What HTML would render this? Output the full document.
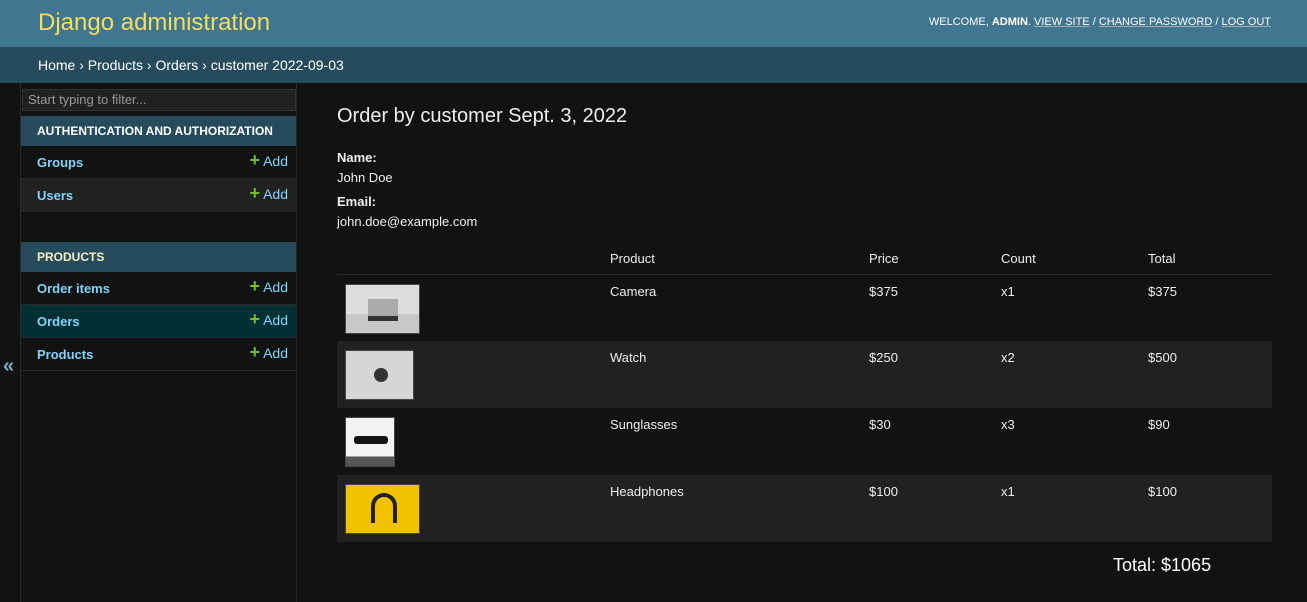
<!DOCTYPE html>
<html><head><meta charset="utf-8"><style>
*{box-sizing:border-box;margin:0;padding:0}
body{width:1307px;height:602px;overflow:hidden;background:#121212;font-family:"Liberation Sans",sans-serif;color:#eee;position:relative}
#hdr{position:absolute;left:0;top:0;width:1307px;height:47px;background:#417690;}
#hdr .brand{position:absolute;left:38px;top:9px;font-size:24px;color:#f5dd5d;}
#hdr .tools{position:absolute;right:36px;top:16px;font-size:11px;letter-spacing:0;color:#fff;white-space:nowrap}
#hdr .tools u{text-decoration:underline;text-decoration-color:#aaa}
#bc{position:absolute;left:0;top:47px;width:1307px;height:36px;background:#264b5d;padding:10px 38px;font-size:14px;color:#fff}
#strip{position:absolute;left:0;top:83px;width:21px;height:519px;border-right:1px solid #2a2a2a}
#strip span{position:absolute;left:3px;top:272px;color:#79aec8;font-size:20px;font-weight:bold}
#side{position:absolute;left:21px;top:83px;width:276px;height:519px;border-right:1px solid #2a2a2a}
.filter{position:absolute;left:1px;top:6px;width:274px;height:22px;border:1px solid #333;background:#212121;color:#999;font-size:13px;padding:2px 5px}
.cap{position:absolute;left:0;width:275px;height:30px;background:#264b5d;font-size:12px;font-weight:bold;letter-spacing:0;padding:8px 16px;color:#fff;white-space:nowrap}
.row{position:absolute;left:0;width:275px;height:33px;border-bottom:1px solid #282828;padding:9px 16px 0;font-size:13px;font-weight:bold;color:#81d4fa}
.row .add{position:absolute;right:8px;top:7px;font-weight:normal;color:#81d4fa;font-size:14px}
.row .add b{color:#70bf2b;font-size:18px;line-height:13px}
h1{position:absolute;left:337px;top:105px;font-size:20px;font-weight:normal;color:#eee;white-space:nowrap}
.lbl{position:absolute;left:337px;font-size:13px;color:#eee}
table{position:absolute;left:337px;top:243px;width:935px;border-collapse:collapse;font-size:13px;color:#eee}
th{font-weight:normal;text-align:left;height:31px;border-bottom:1px solid #2a2a2a;padding:0}
td{height:67px;vertical-align:top;padding:9px 0 0 0}
tr.alt td{background:#212121}
.img{margin-left:8px;height:50px;border:1px solid #444}
#total{position:absolute;left:1113px;top:555px;font-size:18px;color:#fff}
</style></head><body>
<div id="hdr"><div class="brand">Django administration</div>
<div class="tools">WELCOME, <b>ADMIN</b>. <u>VIEW SITE</u> / <u>CHANGE PASSWORD</u> / <u>LOG OUT</u></div></div>
<div id="bc">Home › Products › Orders › customer 2022-09-03</div>
<div id="strip"><span>«</span></div>
<div id="side">
<div class="filter">Start typing to filter...</div>
<div class="cap" style="top:33px">AUTHENTICATION AND AUTHORIZATION</div>
<div class="row" style="top:63px">Groups<span class="add"><b>+</b> Add</span></div>
<div class="row" style="top:96px;background:#212121">Users<span class="add"><b>+</b> Add</span></div>
<div class="cap" style="top:159px;color:#f5f0c0">PRODUCTS</div>
<div class="row" style="top:189px">Order items<span class="add"><b>+</b> Add</span></div>
<div class="row" style="top:222px;background:#003033">Orders<span class="add"><b>+</b> Add</span></div>
<div class="row" style="top:255px">Products<span class="add"><b>+</b> Add</span></div>
</div>
<h1>Order by customer Sept. 3, 2022</h1>
<div class="lbl" style="top:150px;font-weight:bold">Name:</div>
<div class="lbl" style="top:170px">John Doe</div>
<div class="lbl" style="top:194px;font-weight:bold">Email:</div>
<div class="lbl" style="top:214px">john.doe@example.com</div>
<table>
<tr><th style="width:273px"></th><th style="width:259px">Product</th><th style="width:132px">Price</th><th style="width:147px">Count</th><th>Total</th></tr>
<tr><td><div class="img" style="width:75px;background:linear-gradient(#ddd 0 60%,#c8c8c8 60%);position:relative"><div style="position:absolute;left:22px;top:14px;width:30px;height:22px;background:#aaa;border-bottom:5px solid #333"></div></div></td><td>Camera</td><td>$375</td><td>x1</td><td>$375</td></tr>
<tr class="alt"><td><div class="img" style="width:69px;background:#d6d6d6;position:relative"><div style="position:absolute;left:28px;top:17px;width:14px;height:14px;border-radius:50%;background:#333"></div></div></td><td>Watch</td><td>$250</td><td>x2</td><td>$500</td></tr>
<tr><td><div class="img" style="width:50px;background:linear-gradient(#f2f2f2 0 80%,#555 80%);position:relative"><div style="position:absolute;left:8px;top:18px;width:34px;height:8px;background:#111;border-radius:3px"></div></div></td><td>Sunglasses</td><td>$30</td><td>x3</td><td>$90</td></tr>
<tr class="alt"><td><div class="img" style="width:75px;background:#f2c200;position:relative"><div style="position:absolute;left:25px;top:8px;width:26px;height:30px;border:4px solid #222;border-bottom:none;border-radius:14px 14px 0 0"></div></div></td><td>Headphones</td><td>$100</td><td>x1</td><td>$100</td></tr>
</table>
<div id="total">Total: $1065</div>
</body></html>
